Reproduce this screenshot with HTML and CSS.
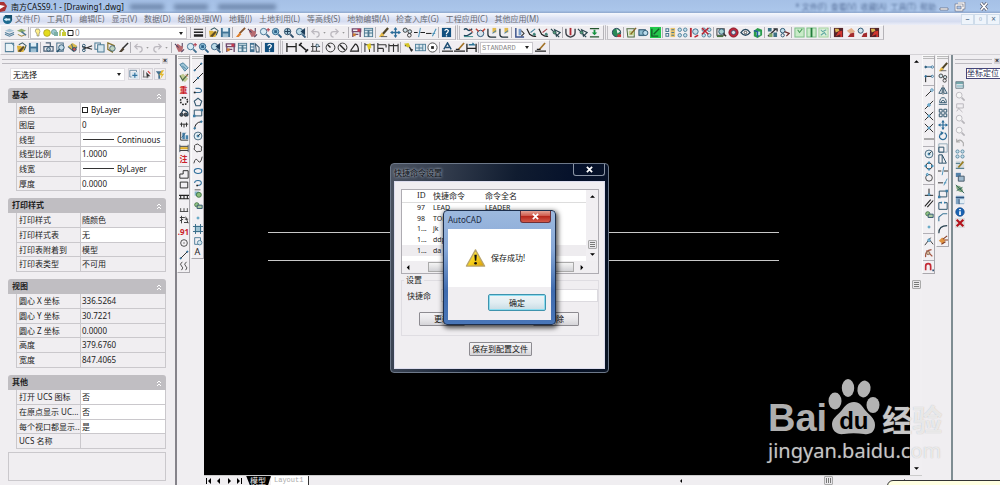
FILE: index.html
```html
<!DOCTYPE html>
<html lang="zh-CN">

<head>
    <meta charset="UTF-8">
    <meta name="viewport" content="width=device-width, initial-scale=1.0">
    <title>南方CASS9.1 - [Drawing1.dwg]</title>
    <link rel="stylesheet" href="styles.css">
</head>

<body>

    <!-- Title bar -->
    <header class="titlebar">
        <svg class="app-logo" viewBox="0 0 8 12"><path d="M0 1h4l3 4-2 5-5 1z" fill="#a33"/><path d="M0 4l5 1-5 3z" fill="#fff"/></svg>
        <span class="title-text">南方CASS9.1 - [Drawing1.dwg]</span>
        <span class="ghost"><i></i><i></i><i></i></span>
        <span class="ghost-menu">* 文件(F)&nbsp; 查看(V)&nbsp; 收藏(A)&nbsp; 工具(T)&nbsp; 帮助</span>
        <div class="window-buttons">
            <button aria-label="Minimize"><svg viewBox="0 0 12 10"><path d="M2 6h8v2H2z" fill="#fff" stroke="#556" stroke-width=".6"/></svg></button>
            <button aria-label="Restore"><svg viewBox="0 0 12 10"><path d="M4 1h6v5H8M2 3h6v5H2z" fill="none" stroke="#556" stroke-width="2.4"/><path d="M4 1h6v5H8M2 3h6v5H2z" fill="none" stroke="#fff" stroke-width="1.3"/></svg></button>
            <button class="wide" aria-label="Close"><svg viewBox="0 0 12 10"><path d="M3 1l6 7M9 1L3 8" stroke="#556" stroke-width="3"/><path d="M3 1l6 7M9 1L3 8" stroke="#fff" stroke-width="1.7"/></svg></button>
        </div>
    </header>

    <!-- Menu -->
    <nav class="menubar">
        <svg class="doc-logo" viewBox="0 0 12 12"><circle cx="6" cy="6" r="5" fill="#1d6a90"/><path d="M3 1h8v6H6z" fill="#15506f"/><path d="M2 6l3-2v1h4v2H5v1z" fill="#d9f1fa"/></svg>
        <a href="#">文件(F)</a>
        <a href="#">工具(T)</a>
        <a href="#">编辑(E)</a>
        <a href="#">显示(V)</a>
        <a href="#">数据(D)</a>
        <a href="#">绘图处理(W)</a>
        <a href="#">地籍(J)</a>
        <a href="#">土地利用(L)</a>
        <a href="#">等高线(S)</a>
        <a href="#">地物编辑(A)</a>
        <a href="#">检查入库(G)</a>
        <a href="#">工程应用(C)</a>
        <a href="#">其他应用(M)</a>
        <div class="mdi-buttons">
            <button aria-label="Minimize drawing">–</button>
            <button aria-label="Restore drawing">▫</button>
            <button aria-label="Close drawing">×</button>
        </div>
    </nav>

    <!-- Toolbars -->
    <div class="toolbar-area">
        <div class="toolbar-row">
            <div class="toolbar">
                <span data-icons="layers layerPrev |"></span>
                <div class="combo layer-combo">
                    <svg viewBox="0 0 40 10"><path d="M3 6Q0 3 2 1h3q2 2 0 5v2H3z" fill="#ffef8a" stroke="#776" stroke-width=".6"/><circle cx="13" cy="5" r="3.4" fill="#e4dc1c" stroke="#998c22" stroke-width=".6"/><circle cx="20" cy="4" r="2.6" fill="#9bc6cf" stroke="#587" stroke-width=".6"/><path d="M20 4h4v4h-4z" fill="#7cb0a6"/><path d="M26 8V3q2-3 4 0v1" fill="none" stroke="#9a2" stroke-width="1.2"/><path d="M28 4h4v4h-4z" fill="#cc3"/><path d="M34 2.5h5v5h-5z" fill="#fff" stroke="#222"/></svg>
                    <select aria-label="图层"><option>0</option></select>
                </div>
                <span data-icons="| lineweight | open save | brush pan zoom zoomWin zoomExt zoomPrev | undo caret redo caret | props table | eraser move copy trim extend | help"></span>
            </div>
            <div class="toolbar" data-icons="curveA curveB curveC curveC | align vee veeRed veeX | shield veeX levelDown"></div>
            <div class="toolbar" data-icons="globe | mapEdit camera greenEdit | nodesY nodes nodesRed nodesX | photo ring eye cube | puzzle nodesArrow | sheetA sheetB sheetC | star starLight starRing star"></div>
        </div>
        <div class="toolbar-row">
            <div class="toolbar" data-icons="newDoc open save | print preview publish | cut copyDoc paste match | undo caret redo caret | pan zoom zoomWin zoomPrev | props table design | help"></div>
            <div class="toolbar">
                <span data-icons="dimH dimAlign ordinate | radius diameter angle | qdim baseline dimCont | leader tolerance center | dimText dimEdit dimUpdate |"></span>
                <div class="combo style-combo">
                    <select aria-label="标注样式"><option>STANDARD</option></select>
                </div>
                <span data-icons="dimEdit"></span>
            </div>
        </div>
    </div>

    <div class="workspace">

        <!-- Properties palette -->
        <aside class="properties">
            <div class="palette-grip"><button aria-label="关闭">×</button></div>
            <div class="selection">
                <div class="combo"><select aria-label="选择"><option>无选择</option></select></div>
                <span class="selection-tools" data-icons="addSel pickSel quickSel"></span>
            </div>

            <section>
                <h2>基本 <button aria-label="折叠"><svg viewBox="0 0 6 8"><path d="M1 4l2-2 2 2M1 7l2-2 2 2" fill="none" stroke="#fff"/></svg></button></h2>
                <table>
                    <tr><th>颜色</th><td class="edit"><span class="swatch"></span>ByLayer</td></tr>
                    <tr><th>图层</th><td class="edit">0</td></tr>
                    <tr><th>线型</th><td class="edit"><span class="sample"></span>Continuous</td></tr>
                    <tr><th>线型比例</th><td class="edit">1.0000</td></tr>
                    <tr><th>线宽</th><td class="edit"><span class="sample"></span>ByLayer</td></tr>
                    <tr><th>厚度</th><td class="edit">0.0000</td></tr>
                </table>
            </section>

            <section>
                <h2>打印样式 <button aria-label="折叠"><svg viewBox="0 0 6 8"><path d="M1 4l2-2 2 2M1 7l2-2 2 2" fill="none" stroke="#fff"/></svg></button></h2>
                <table>
                    <tr><th>打印样式</th><td>随颜色</td></tr>
                    <tr><th>打印样式表</th><td class="edit">无</td></tr>
                    <tr><th>打印表附着到</th><td>模型</td></tr>
                    <tr><th>打印表类型</th><td>不可用</td></tr>
                </table>
            </section>

            <section>
                <h2>视图 <button aria-label="折叠"><svg viewBox="0 0 6 8"><path d="M1 4l2-2 2 2M1 7l2-2 2 2" fill="none" stroke="#fff"/></svg></button></h2>
                <table>
                    <tr><th>圆心 X 坐标</th><td>336.5264</td></tr>
                    <tr><th>圆心 Y 坐标</th><td>30.7221</td></tr>
                    <tr><th>圆心 Z 坐标</th><td>0.0000</td></tr>
                    <tr><th>高度</th><td>379.6760</td></tr>
                    <tr><th>宽度</th><td>847.4065</td></tr>
                </table>
            </section>

            <section>
                <h2>其他 <button aria-label="折叠"><svg viewBox="0 0 6 8"><path d="M1 4l2-2 2 2M1 7l2-2 2 2" fill="none" stroke="#fff"/></svg></button></h2>
                <table>
                    <tr><th>打开 UCS 图标</th><td class="edit">否</td></tr>
                    <tr><th>在原点显示 UC...</th><td class="edit">否</td></tr>
                    <tr><th>每个视口都显示...</th><td class="edit">是</td></tr>
                    <tr><th>UCS 名称</th><td></td></tr>
                </table>
            </section>
            <div class="hint-box"></div>
        </aside>

        <div class="side-tools">
            <div class="vtoolbar left-a" data-icons="tag tagEdit t:重 dots binoc ticks chart measure t:注 | notch box railing comb hash t:.91 sun line waves"></div>
            <div class="vtoolbar left-b" data-icons="line xline pline polygon rect arc circle cloud spline ellipse ellArc insert block point hatch region t:A"></div>
        </div>

        <!-- Drawing area -->
        <main class="drawing">
            <div class="canvas-row">
                <div class="canvas">
                    <svg class="lines"><path d="M64 177.5h511M64 205.5h511" stroke="#c8c8c8"/></svg>
                </div>
                <div class="vscroll">
                    <button aria-label="Scroll up"><svg viewBox="0 0 6 4"><path d="M0 4l3-3 3 3z"/></svg></button>
                    <span class="thumb"></span>
                    <button aria-label="Scroll down"><svg viewBox="0 0 6 4"><path d="M0 0l3 3 3-3z"/></svg></button>
                </div>
            </div>
            <div class="layout-tabs">
                <button aria-label="First"><svg viewBox="0 0 8 8"><path d="M1 1h1v6H1zM6 1v6L3 4z"/></svg></button>
                <button aria-label="Previous"><svg viewBox="0 0 8 8"><path d="M5 1v6L2 4z"/></svg></button>
                <button aria-label="Next"><svg viewBox="0 0 8 8"><path d="M3 1v6l3-3z"/></svg></button>
                <button aria-label="Last"><svg viewBox="0 0 8 8"><path d="M6 1h1v6H6zM2 1v6l3-3z"/></svg></button>
                <a class="tab active" href="#">模型</a>
                <a class="tab" href="#">Layout1</a>
                <div class="hscroll">
                    <button aria-label="Scroll left"><svg viewBox="0 0 8 8"><path d="M5 2v4L3 4z"/></svg></button>
                    <span class="thumb"></span>
                    <button aria-label="Scroll right"><svg viewBox="0 0 8 8"><path d="M3 2v4l2-2z"/></svg></button>
                </div>
            </div>
        </main>

        <div class="side-tools">
            <div class="vtoolbar right-a" data-icons="tempTrack from | endpoint midpoint cross cross dash | circle quadrant tangent | perp parallel block point | nearest none | magnet"></div>
            <div class="vtoolbar right-b" data-icons="eraser copy mirror offset array move rotate scale stretch trim extend rect breakRect chamfer fillet explode"></div>
        </div>

        <aside class="coord-panel">
            <div class="palette-grip"><button aria-label="关闭">×</button></div>
            <button class="coord-button">坐标定位</button>
            <div class="coord-tools" data-icons="stack zoomGrey pageGrey zoomGrey zoomGrey undoGrey nodes pencil windows leaf sheet info redX"></div>
        </aside>
    </div>

    <!-- Shortcut command dialog -->
    <div class="dialog settings" role="dialog" aria-label="快捷命令设置">
        <div class="dialog-title">快捷命令设置
            <button class="close" aria-label="关闭"><svg viewBox="0 0 8 8"><path d="M1 1l6 6M7 1L1 7" stroke="#fff" stroke-width="2"/></svg></button>
        </div>
        <div class="dialog-body">
            <div class="command-list">
                <div class="list-main">
                    <table>
                        <tr><th></th><th>ID</th><th>快捷命令</th><th>命令全名</th></tr>
                        <tr><td></td><td>97</td><td>LEAD</td><td>LEADER</td></tr>
                        <tr><td></td><td>98</td><td>TOL</td><td>TOLERANCE</td></tr>
                        <tr><td></td><td>1...</td><td>jk</td><td></td></tr>
                        <tr><td></td><td>1...</td><td>ddp</td><td></td></tr>
                        <tr class="selected"><td></td><td>1...</td><td>da</td><td></td></tr>
                    </table>
                    <div class="vscroll">
                        <button aria-label="Scroll up"><svg viewBox="0 0 6 4"><path d="M0 4l3-3 3 3z"/></svg></button>
                        <span class="thumb"></span>
                        <button aria-label="Scroll down"><svg viewBox="0 0 6 4"><path d="M0 0l3 3 3-3z"/></svg></button>
                    </div>
                </div>
                <div class="list-hscroll">
                    <button aria-label="Scroll left"><svg viewBox="0 0 8 8"><path d="M5 1v6L2 4z"/></svg></button>
                    <span class="bar"></span>
                    <button aria-label="Scroll right"><svg viewBox="0 0 8 8"><path d="M3 1v6l3-3z"/></svg></button>
                </div>
            </div>
            <fieldset>
                <legend>设置</legend>
                <div class="field">
                    <label for="alias">快捷命</label>
                    <input type="text" id="alias" value="da">
                </div>
                <div class="field-buttons">
                    <button class="btn">更新</button>
                    <button class="btn">删除</button>
                </div>
            </fieldset>
            <button class="btn save-config">保存到配置文件</button>
        </div>
    </div>

    <!-- Message box -->
    <div class="dialog message" role="alertdialog" aria-label="AutoCAD">
        <div class="dialog-title">AutoCAD
            <button class="close" aria-label="关闭"><svg viewBox="0 0 8 8"><path d="M1 1l6 6M7 1L1 7" stroke="#fff" stroke-width="2"/></svg></button>
        </div>
        <div class="message-body">
            <svg class="warning" viewBox="0 0 22 20"><defs><linearGradient id="warn" x2="1" y2="1"><stop offset="0" stop-color="#fff27a"/><stop offset=".5" stop-color="#f7d21c"/><stop offset="1" stop-color="#d79a08"/></linearGradient></defs><path d="M11 1.5L20.5 18.5h-19z" fill="url(#warn)" stroke="#b9a469" stroke-width="1.4" stroke-linejoin="round"/><path d="M9.8 6.5h2.6l-.6 6.5h-1.4z" fill="#111"/><circle cx="11.1" cy="15.5" r="1.4" fill="#111"/></svg>
            <span>保存成功!</span>
        </div>
        <div class="message-footer"><button class="ok">确定</button></div>
    </div>

    <!-- Watermark -->
    <div class="watermark">
        <div class="brand">
            <span class="bai">Bai</span>
            <span class="paw">
                <svg viewBox="0 0 52 56"><ellipse cx="7" cy="22" rx="6.5" ry="8.5"/><ellipse cx="20" cy="9" rx="6.2" ry="9"/><ellipse cx="36" cy="10" rx="6.5" ry="8.5" transform="rotate(12 36 10)"/><ellipse cx="45" cy="26" rx="6.5" ry="8"/><path d="M26 23c6 0 8 4 11 8 4 5 10 8 10 15 0 7-5 10-11 9-7-1-14-1-20 0-7 1-12-3-12-10 0-6 6-9 10-14 3-4 6-8 12-8z"/></svg>
                <b>du</b>
            </span>
            <span class="jy">经验</span>
        </div>
        <div class="url">jingyan.baidu.com</div>
    </div>

    <div class="balloon"></div>

    <script src="script.js"></script>
</body>

</html>
```

FILE: styles.css
```css
* {
    box-sizing: border-box;
}

body {
    margin: 0;
    height: 100vh;
    display: flex;
    flex-direction: column;
    overflow: hidden;
    position: relative;
    background: #f0eef1;
    color: #222;
    font-family: "Noto Sans", "Noto Sans CJK SC", sans-serif;
    font-size: 8px;
    line-height: 12px;
}

button {
    margin: 0;
    padding: 0;
    border: none;
    background: none;
    font: inherit;
    color: inherit;
    display: inline-flex;
    align-items: center;
    justify-content: center;
}

svg {
    display: block;
}

a {
    color: inherit;
    text-decoration: none;
}

/* Title bar */
.titlebar {
    flex: none;
    height: 13px;
    display: flex;
    align-items: center;
    background: linear-gradient(#a5c0e6, #abc6ea 80%, #8fa8cd);
    overflow: hidden;
}

.app-logo {
    width: 8px;
    height: 12px;
    margin-right: 3px;
}

.title-text {
    color: #111;
}

.ghost {
    display: flex;
    gap: 10px;
    margin-left: 6px;
    filter: blur(2px);
    opacity: 0.5;
}

.ghost i {
    width: 34px;
    height: 6px;
    background: #3c5378;
}

.ghost i:last-child {
    width: 58px;
}

.ghost-menu {
    margin-left: auto;
    filter: blur(1px);
    color: #56709a;
}

.window-buttons {
    display: flex;
    margin-right: 0;
}

.window-buttons button {
    width: 16px;
    height: 12px;
}

.window-buttons .wide {
    width: 32px;
}

.window-buttons svg {
    width: 12px;
    height: 10px;
}

/* Menu */
.menubar {
    flex: none;
    height: 12px;
    display: flex;
    align-items: center;
    gap: 8px;
    background: linear-gradient(#f6f8fd, #dfe4f4 40%, #d5dcf0 70%, #eceef8);
    color: #686b74;
}

.menubar > a + a {
    margin-left: -1px;
}

.doc-logo {
    width: 11px;
    height: 11px;
    margin: 0 -6px 0 2px;
}

.mdi-buttons {
    margin-left: auto;
    display: flex;
}

.mdi-buttons button {
    width: 13px;
    height: 11px;
    border: 1px solid #cfdcea;
    background: #eef4fb;
    color: #4b6a88;
}

/* Toolbars */
.toolbar-area {
    flex: none;
    height: 30px;
    border-bottom: 1px solid #d4d2d6;
}

.toolbar-row {
    display: flex;
    height: 15px;
}

.toolbar,
.toolbar > span {
    display: flex;
    align-items: center;
}

.toolbar {
    border: 1px solid #fafafa;
    border-right-color: #b5b3b8;
    border-bottom-color: #c5c3c8;
    padding: 0 3px 0 2px;
}

.toolbar + .toolbar {
    margin-left: 1px;
    border-left: 3px double #c0bec3;
}

.tool {
    flex: none;
    width: 12px;
    height: 12px;
}

.tool svg {
    width: 11px;
    height: 11px;
}

.tool.caret {
    width: 7px;
}

.tool.text {
    color: #222;
    font-size: 9px;
}

.tool.red {
    color: #cb1f2b;
    font-size: 8px;
    font-weight: bold;
}

.sep {
    flex: none;
    width: 1px;
    height: 11px;
    margin: 0 1px;
    background: #b2b0b6;
}

.combo {
    position: relative;
}

.combo::after {
    content: "";
    position: absolute;
    right: 4px;
    top: 5px;
    border: 2px solid transparent;
    border-top: 3px solid #222;
    pointer-events: none;
}

.combo select {
    appearance: none;
    width: 100%;
    height: 12px;
    border: 1px solid #c9c7cc;
    border-radius: 0;
    background: #fff;
    padding: 0 2px;
    font: inherit;
    font-size: 8px;
    line-height: 10px;
    color: #333;
}

.layer-combo {
    width: 157px;
    margin-right: 2px;
}

.layer-combo svg {
    position: absolute;
    left: 4px;
    top: 1px;
    width: 40px;
    height: 10px;
}

.layer-combo select {
    padding-left: 44px;
    color: #888;
}

.style-combo {
    width: 53px;
    margin-right: 1px;
}

.style-combo select {
    padding: 0 0 0 1px;
    font-family: "Liberation Mono", monospace;
    font-size: 7px;
    color: #888;
}

/* Workspace */
.workspace {
    flex: 1;
    min-height: 0;
    display: flex;
}

.properties {
    width: 177px;
    padding: 0 9px 0 8px;
    border-right: 2px solid #85838a;
}

.palette-grip {
    height: 12px;
    display: flex;
    align-items: center;
    gap: 2px;
}

.palette-grip::before {
    content: "";
    flex: 1;
    height: 3px;
    border: 1px solid #bcbac0;
    border-width: 1px 0;
    margin-left: -6px;
}

.palette-grip button {
    width: 6px;
    height: 6px;
    margin-right: -2px;
    font-size: 7px;
    font-weight: bold;
    background: #d5d3d8;
}

.selection {
    display: flex;
    gap: 3px;
    margin: 1px 0 7px 2px;
}

.selection .combo {
    flex: 1;
}

.selection .combo select {
    height: 13px;
    border-color: #e1dfe4;
    color: #111;
}

.selection-tools {
    display: flex;
    gap: 1px;
}

.selection-tools .tool {
    border: 1px solid #d5d3d9;
}

.properties section {
    margin-bottom: 7px;
}

.properties section:last-of-type {
    margin-bottom: 3px;
}

.properties h2 {
    display: flex;
    justify-content: space-between;
    margin: 0;
    height: 15px;
    padding: 0 4px;
    border-radius: 3px 3px 0 0;
    background: #c0bec2;
    font-size: 8px;
    line-height: 14px;
}

.properties h2 svg {
    width: 6px;
    height: 8px;
}

.properties table {
    width: calc(100% - 8px);
    margin-left: 8px;
    border-spacing: 0;
    border-left: 1px solid #cac8cc;
    table-layout: fixed;
}

.properties tr {
    height: 15px;
}

.properties tr:nth-child(3n) {
    height: 14px;
}

.properties th,
.properties td {
    padding: 0 1px;
    border: 1px solid #cac8cc;
    border-width: 0 1px 1px 0;
    font-weight: normal;
    text-align: left;
    white-space: nowrap;
    overflow: hidden;
}

.properties th {
    width: 64px;
    padding: 0 0 1px 2px;
    line-height: 11px;
}

.properties .edit {
    background: #fff;
}

.swatch {
    display: inline-block;
    width: 6px;
    height: 6px;
    margin-right: 3px;
    border: 1px solid #222;
}

.sample {
    display: inline-block;
    width: 31px;
    height: 1px;
    margin: 0 3px 3px 1px;
    background: #333;
}

.hint-box {
    height: 29px;
    border: 1px solid #cac8cc;
}

.side-tools {
    flex: none;
    display: flex;
    align-items: flex-start;
    gap: 1px;
    width: 27px;
}

.vtoolbar {
    width: 13px;
    display: flex;
    flex-direction: column;
    align-items: center;
    padding-top: 5px;
    border: 1px solid #fafafa;
    border-right-color: #aaa8ad;
    border-bottom-color: #aaa8ad;
    background: linear-gradient(#bbb 1px, transparent 1px, transparent 2px, #bbb 2px, #bbb 3px, transparent 3px) no-repeat #f2f0f3;
}

.vtoolbar .tool {
    flex: 1;
    height: auto;
    min-height: 0;
}

.vtoolbar .tool svg {
    width: 10px;
    height: 10px;
}

.vtoolbar .sep {
    width: 11px;
    height: 1px;
    margin: 1px 0;
}

.left-a {
    height: 218px;
}

.left-b {
    height: 204px;
}

.right-a {
    height: 219px;
}

.right-b {
    height: 192px;
}

/* Drawing area */
.drawing {
    flex: 1;
    min-width: 0;
    display: flex;
    flex-direction: column;
}

.canvas-row {
    flex: 1;
    min-height: 0;
    display: flex;
}

.canvas {
    flex: 1;
    background: #000;
}

.lines {
    width: 100%;
    height: 100%;
}

.vscroll {
    width: 12px;
    display: flex;
    flex-direction: column;
    align-items: center;
    justify-content: space-between;
    padding: 4px 0;
    background: #f1eff2;
}

.vscroll svg {
    width: 5px;
    height: 4px;
}

.thumb {
    width: 9px;
    height: 9px;
    border: 1px solid #aaa;
    border-radius: 1px;
    background: repeating-linear-gradient(#777 0 1px, #eee 1px 2px) center / 5px 5px no-repeat #e7e5e9;
}

.canvas-row .vscroll .thumb {
    margin-top: 39px;
}

.layout-tabs {
    flex: none;
    height: 10px;
    display: flex;
    align-items: center;
    border-top: 1px solid #ccc;
}

.layout-tabs button {
    width: 10px;
    height: 9px;
}

.layout-tabs svg {
    width: 8px;
    height: 8px;
}

.tab {
    height: 10px;
    padding: 0 5px 0 3px;
    line-height: 9px;
    color: #aaa;
    font-family: "Liberation Mono", monospace;
    font-size: 7px;
    background: #fff;
    border-right: 1px solid #333;
}

.tab.active {
    margin-left: 2px;
    padding: 0 4px;
    background: #000;
    color: #eee;
    font-family: "Noto Sans CJK SC", sans-serif;
    font-size: 8px;
    clip-path: polygon(0 0, 100% 0, 88% 100%, 16% 100%);
}

.hscroll {
    flex: 1;
    max-width: 246px;
    margin-left: auto;
    display: flex;
    align-items: center;
    justify-content: space-between;
    padding-right: 12px;
}

.hscroll .thumb {
    margin-left: 70px;
    background: repeating-linear-gradient(90deg, #777 0 1px, #eee 1px 2px) center / 5px 5px no-repeat #e7e5e9;
}

/* Coordinate panel */
.coord-panel {
    flex: none;
    width: 49px;
    margin-left: 2px;
    border-left: 2px solid #7e8c92;
    overflow: hidden;
}

.coord-panel .palette-grip::before {
    margin-left: 2px;
}

.coord-panel .palette-grip button {
    margin-right: 0;
}

.coord-button {
    width: 40px;
    height: 11px;
    margin-left: 13px;
    justify-content: flex-start;
    border: 1px solid #454578;
    background: #fff;
    color: #2c2c55;
}

.coord-tools {
    width: 12px;
    height: 150px;
    display: flex;
    flex-direction: column;
    margin-left: 1px;
}

.coord-tools .tool {
    flex: 1;
    height: auto;
    min-height: 0;
}

.coord-tools .tool svg {
    width: 10px;
    height: 10px;
}

/* Dialogs */
.dialog {
    position: absolute;
    border-radius: 4px;
}

.dialog-title {
    display: flex;
    justify-content: space-between;
}

.close svg {
    width: 7px;
    height: 7px;
}

.settings {
    left: 390px;
    top: 163px;
    width: 219px;
    padding: 0 3px 3px;
    border: 1px solid #6d7889;
    background: linear-gradient(100deg, #4c5462, #101c30 50%, #04102a 75%, #0a1424);
}

.settings .dialog-title {
    height: 17px;
    line-height: 17px;
    color: #0b0d10;
    text-shadow: 0 0 3px #aeb8c6, 0 0 3px #8f99a8;
}

.settings .close {
    width: 32px;
    height: 12px;
    border: 1px solid #8b95a5;
    border-top: 0;
    border-radius: 0 0 3px 3px;
}

.dialog-body {
    display: flex;
    flex-direction: column;
    padding: 7px 5px 12px 6px;
    background: #f0eef1;
    border: 1px solid #dde;
}

.command-list {
    height: 85px;
    display: flex;
    flex-direction: column;
    border: 1px solid #aeacb2;
}

.list-main {
    flex: 1;
    min-height: 0;
    display: flex;
    background: #fff;
}

.command-list table {
    flex: 1;
    height: 66px;
    border-spacing: 0;
    table-layout: fixed;
    line-height: 10px;
}

.command-list th,
.command-list td {
    padding: 0 0 0 2px;
    font-size: 7px;
    font-weight: normal;
    text-align: left;
    white-space: nowrap;
}

.command-list th {
    height: 13px;
    font-size: 8px;
    border-bottom: 1px solid #ddd;
}

.command-list th:nth-child(1) {
    width: 13px;
}

.command-list th:nth-child(2) {
    width: 16px;
    font-family: "Liberation Serif", serif;
}

.command-list th:nth-child(3) {
    width: 52px;
}

.selected {
    background: #eeecef;
}

.command-list .vscroll {
    width: 12px;
}

.command-list .vscroll .thumb {
    margin-top: 37px;
}

.list-hscroll {
    height: 12px;
    display: flex;
    align-items: center;
    padding-right: 11px;
}

.list-hscroll button {
    width: 12px;
}

.list-hscroll svg {
    width: 7px;
    height: 7px;
}

.list-hscroll .bar {
    flex: 1;
    height: 10px;
    margin: 0 1px 0 14px;
    border: 1px solid #aaa;
    background: linear-gradient(#f4f4f4, #d2d2d6);
}

fieldset {
    margin: 0;
    padding: 0;
    min-width: 0;
    border: 1px solid #dfdde2;
    height: 62px;
}

legend {
    margin-left: 2px;
    padding: 0 2px;
}

.field {
    display: flex;
    align-items: center;
    gap: 10px;
    padding: 3px 0 0 5px;
}

.field input {
    flex: 1;
    min-width: 0;
    height: 13px;
    padding: 0 3px;
    border: 1px solid #dcdadf;
    font: inherit;
    background: #fff;
}

.field-buttons {
    display: flex;
    justify-content: space-between;
    padding: 10px 19px 0 17px;
}

.btn {
    width: 46px;
    height: 14px;
    border: 1px solid #8d8b91;
    border-radius: 1px;
    background: linear-gradient(#f4f3f5, #e9e8eb 50%, #d5d4d8);
    color: #111;
}

.save-config {
    align-self: center;
    width: 63px;
    margin-top: 6px;
}

.message {
    left: 443px;
    top: 210px;
    width: 113px;
    padding: 0 4px 4px;
    border: 1px solid #1d2f4d;
    background: linear-gradient(#9db9de, #88a9d8 38px, #3f6bae 80px, #4976b8);
    box-shadow: 1px 2px 5px 1px rgba(0, 0, 0, 0.7);
}

.message .dialog-title {
    height: 18px;
    line-height: 18px;
    color: #1a2740;
}

.message .close {
    width: 31px;
    height: 12px;
    border: 1px solid #6e2f37;
    border-top: 0;
    border-radius: 0 0 3px 3px;
    background: linear-gradient(#e4a295, #d0584a 45%, #b8281d 50%, #d3594a);
}

.message-body {
    height: 58px;
    display: flex;
    align-items: center;
    gap: 5px;
    padding-left: 17px;
    background: #fff;
    color: #111;
}

.warning {
    width: 21px;
    height: 20px;
}

.message-footer {
    height: 33px;
    display: flex;
    justify-content: flex-end;
    align-items: flex-start;
    padding: 7px 5px;
    background: #f0eef1;
}

.ok {
    width: 58px;
    height: 17px;
    border: 1px solid #3f93ad;
    border-radius: 2px;
    box-shadow: inset 0 0 0 1px #8adcf0;
    background: linear-gradient(#eff4f6, #e1edf2 50%, #c8dce4);
    color: #111;
}

/* Watermark */
.watermark {
    position: absolute;
    left: 768px;
    top: 379px;
    color: rgba(255, 255, 255, 0.7);
    white-space: nowrap;
    pointer-events: none;
}

.brand {
    display: flex;
    align-items: flex-end;
    height: 58px;
}

.bai {
    font: bold 38px/38px "Liberation Sans", sans-serif;
}

.paw {
    position: relative;
    width: 52px;
    height: 56px;
    margin: 0 2px 2px 1px;
}

.paw svg {
    width: 52px;
    height: 56px;
    fill: #b3b3b3;
}

.paw b {
    position: absolute;
    left: 11px;
    bottom: 2px;
    font: bold 24px/24px "Liberation Sans", sans-serif;
    color: #000;
}

.jy {
    font: bold 30px/38px "Noto Sans CJK SC", sans-serif;
    text-shadow: 0 0 1px rgba(140, 140, 140, 0.6);
}

.url {
    font-size: 20px;
    line-height: 28px;
    text-shadow: 0 0 1px rgba(140, 140, 140, 0.6);
}

.balloon {
    position: absolute;
    left: 887px;
    right: -6px;
    bottom: -10px;
    height: 15px;
    border: 1px solid #333;
    border-radius: 6px;
    background: #ffffe1;
}
```

FILE: script.js
```javascript
// Icon markup, all on a 12x12 grid
const N = '#24506b';
const s = (d, c = N, w = 1.1) => `<path d="${d}" fill="none" stroke="${c}" stroke-width="${w}"/>`;
const f = (d, c = N) => `<path d="${d}" fill="${c}"/>`;
const c = (x, y, r, fill = 'none', stroke = N) => `<circle cx="${x}" cy="${y}" r="${r}" fill="${fill}" stroke="${stroke}"/>`;
const lens = (col, fill) => c(5, 5, 3.5, fill, col) + s('M8 8l3.5 3.5', col, 2);
const grid = (fill, col) => [3, 9].map(x => [3, 9].map(y => c(x, y, 1.9, fill, col)).join('')).join('');

const icons = {
    layers: f('M1 4l5-2 5 2-5 2z', '#a8c3d4') + s('M1 6l5 2 5-2M1 8l5 2 5-2', '#55809c'),
    layerPrev: f('M1 4l5-2 5 2-5 2z', '#8da867') + s('M2 8l4 2 5-2', '#a58e45') + s('M6 5l5 4', '#4a7693', 1.6),
    lineweight: f('M1 2h10v1H1zM1 5h10v1.5H1zM1 8h10v2.5H1z', '#222'),
    open: f('M1 4h4l1 1h5l-3 6H2z', '#dcb33c') + s('M3 3l4-2 4 3-2 5', '#3a5d66') + f('M2 10l6-6 1 2-4 5z', '#5c4b28'),
    save: f('M1 1h10v10H1z', '#3f7395') + f('M3 1h6v4H3z', '#dfeef6') + f('M3 7h6v4H3z', '#9dbfd2'),
    brush: s('M11 1L5 7', '#86552d', 2) + f('M5 6l2 2-3 3-3 0z', '#e0802c'),
    pan: f('M2 5l2-3 3 2 3 1-1 5-4 1z', '#b86b70') + s('M1 2l4 4M9 1v4M8 11l3-3', '#4c3b59'),
    zoom: lens('#3f6f8f', '#d9ecf5') + s('M8 3h4M10 1v4', '#b03a4a'),
    zoomWin: lens('#2a5f86', '#8fc0d8') + f('M3.5 3.5h3v3h-3z', '#2a5f86'),
    zoomExt: lens('#2b4b66', '#a9cbdb') + s('M2 5h6M5 2v6', '#23405a'),
    zoomPrev: lens('#355f80', '#bcdbe8') + f('M6 5l5-4v8z', '#1d3e5b'),
    undo: s('M2 5h5q3 0 3 3t-3 3M5 2L2 5l3 3', '#bcb9bf', 1.4),
    redo: s('M10 5H5Q2 5 2 8t3 3M7 2l3 3-3 3', '#bcb9bf', 1.4),
    caret: f('M4 5h4L6 8z', '#999'),
    props: s('M1.5 2h9v3h-9zM2 5v6M10 5v6M4 8h4', '#704a6d', 1.5) + f('M2 7h3v3H2z', '#cc7b30') + f('M7 2h3v3H7z', '#c43b50'),
    table: f('M1 1h10v10H1z', '#4d7890') + f('M2 4h3v2H2zM7 4h3v2H7zM2 7h3v3H2zM7 7h3v3H7zM2 2h8v1H2z', '#dce9ef'),
    design: f('M1 1h5v10H1z', '#427292') + f('M2 3h3v2H2zM2 6h3v2H2z', '#e6eef4') + s('M7 2l4 4v5H8z', '#39586f'),
    eraser: s('M11 1L5 8', '#4f4428', 2.4) + f('M4 6l3 3-3 2H1z', '#e6ba49') + f('M3 10h7v1H3z', '#555'),
    move: s('M6 1v10M1 6h10', '#2b6c99', 1.4) + f('M6 0l2 3H4zM6 12l2-3H4zM0 6l3-2v4zM12 6L9 4v4z', '#2b6c99'),
    copy: c(3.5, 3.5, 2.3, '#cfe2ea', '#333') + c(8.5, 5, 2, '#cfe2ea', '#333') + c(8, 9, 2, 'none', '#333'),
    trim: s('M0 6h4M7 6h5', '#222') + s('M7 1L5 11', '#4691b8'),
    extend: s('M0 7h6', '#222') + s('M11 2L7 10', '#4691b8') + s('M7 7h3', '#4691b8'),
    help: f('M1 1h10v10H1z', '#12507f') + s('M4 4q2-3 4 0 0 1-2 3v1', '#fff', 1.4) + f('M5.3 9h1.4v1.4H5.3z', '#fff'),
    curveA: s('M1 3q2-2 4 0t5-1M1 9q3 2 9-3', '#21465d', 1.5) + s('M7 2l4 4', '#b8473a') + f('M1 10h10v1H1z', '#388'),
    curveB: c(6, 7, 3.5, '#d9e6ee', '#234e72') + s('M1 2l3 3M11 2L8 5', '#c04438', 1.6),
    curveC: s('M1 2v6q0 3 3 3h6', '#25343c', 1.4) + f('M6 1h4v5H6z', '#e1ba4b') + s('M6 7l4-3', '#4e7f9d'),
    align: s('M2 1v10h9', '#3c538d', 1.6) + f('M5 2h3v7H5z', '#789cc9') + s('M8 4l3 3-3 3', '#333'),
    vee: s('M1 2l3 6q4 3 7 2', '#222', 1.3) + s('M5 6l5-4', '#43829b') + c(9, 8, 1.2, '#3d8667', '#377'),
    veeRed: s('M1 2l3 6q4 3 7 2', '#222', 1.3) + s('M5 6l5-4', '#a4444a') + c(9, 8, 1.2, '#5f8a67', '#377'),
    veeX: s('M1 2l9 9M5 3l6 3-4 4z', '#2b4750', 1.3) + c(5, 6, 1.6, '#52a179', '#355'),
    shield: s('M1 2v4q0 4 5 5 5-1 5-5V2', '#3b4047', 1.5) + s('M6 1v8', '#b02c35', 2),
    levelDown: f('M1 1h10v1.5H1zM1 10h10v1.5H1z', '#23552e') + f('M5 3h2v3h2L6 9 3 6h2z', '#15933f'),
    globe: c(6, 6, 4.5, '#2a8c56', '#24435a') + f('M6 2l4 3-3 2z', '#eee') + f('M7 8h4v3H7z', '#c73939'),
    mapEdit: s('M1 2h8v9H2z', '#4b6b3d') + f('M3 4h6v5H3z', '#bfd38b') + s('M11 1L5 8', '#856126', 1.5),
    camera: f('M1 3h6v7H1z', '#90bdd1') + s('M1 3h7v6H1z') + c(8, 6.5, 2.8, '#bcdced'),
    greenEdit: f('M0 0h12v12H0z', '#23c84c') + s('M2 2v8h7M10 2L4 8', '#145d29', 1.5),
    nodesY: f('M6 1h5v10H6z', '#e9c46c') + s('M1 2h3v3H1zM1 7h3v3H1zM7 3h3M7 6h3M7 9h3', '#49778f'),
    nodes: grid('#c3dfec', '#4f8099'),
    nodesRed: s('M2 1v10', '#b92431', 2) + c(7, 5, 3, '#cbdde8', '#356a8c') + s('M6 11l4-2', '#b92431', 1.6),
    nodesX: grid('#c3dfec', '#4f8099') + s('M1 1l7 7M8 1L1 8', '#b92431', 1.6),
    nodesArrow: c(4, 4, 2.5, '#c3dfec') + c(4, 9, 1.8) + s('M6 5l5 2-3 3', '#6c3030', 1.4),
    photo: s('M1 2h8v7H1z', '#3e4043') + c(6, 5, 3, '#a5cfd0') + s('M8 7l3 3', '#333', 1.6) + f('M1 9h7v2H1z', '#4a6f43'),
    ring: c(6, 6, 5, '#b9263a', '#812') + c(6, 6, 2.3, '#d9e4ea', '#457'),
    eye: s('M1 6q5-7 10 0-5 6-10 0z', '#27475d', 1.4) + c(6, 6, 1.4, '#fff', '#444'),
    cube: f('M2 4l4-3 5 2v6l-5 3-4-2z', '#2a9c4b') + f('M5 5h4v4H5z', '#bfe1ee') + s('M2 4l4 1v6', '#2359a0', 1.4),
    puzzle: f('M1 1h4v4H1zM7 6h4v5H7z', '#3e7184') + s('M1 10l9-8M7 2h4v3', '#2b2f33', 1.5) + f('M2 7h4v4H2z', '#82a868'),
    sheetA: f('M1 1h10v10H1z', '#c9ebc8') + s('M1 1h10v10H1z', '#7fc089') + s('M4 3l2 3 3-4', '#469b58'),
    sheetB: f('M1 1h10v10H1z', '#c9ebc8') + s('M1 1h10v10H1z', '#7fc089') + f('M5 1h2v10H5z', '#217d3a'),
    sheetC: f('M1 1h10v10H1z', '#d9efd6') + s('M1 1h10v10H1z', '#a5d3a2') + s('M3 3l2 2 4-2M3 9l4-3 2 3', '#5ea8a2'),
    star: f('M1 1h10v10H1z', '#54242a') + f('M3 10l3-5 4-1v7H8V8z', '#d2362f') + f('M2 2l4 0 1 2-4 2z', '#d9b34f'),
    starLight: f('M2 4l5-3 4 4-5 3z', '#e3b08a') + f('M3 11l3-4 4-1v5z', '#a32a2e'),
    starRing: c(4, 4, 2.8, '#d2e4ee') + f('M5 11l2-4 4-1v5z', '#a32a2e'),
    newDoc: s('M1.5 1.5h9v9h-9z', '#558199') + f('M2 2h8v7H2z', '#e8f3f7') + s('M8 1l3 3', '#558199'),
    print: s('M3 1h5v4M1 5h10v5H1z', '#4a6076', 1.3) + c(6, 8, 2, '#b9cbd6'),
    preview: s('M2 1h7v9H2z', '#4a708a') + c(7, 6, 3, '#c5dbe8') + s('M5 8l-3 3', N, 1.6),
    publish: f('M1 5l5-4 5 3-4 6z', '#d8b84c') + s('M1 5l6 5 4-5M5 2l2 7', '#4d6a71') + c(8, 8, 2, '#c55'),
    cut: s('M0 5l11 3M1 8l10-4', '#333', 1.2) + c(2, 4, 1.5) + c(2, 9, 1.5),
    copyDoc: s('M1 1h6v7H1z', '#4d7c96') + f('M4 3h7v8H4z', '#d6e6ee') + s('M4 3h7v8H4z', '#4d7c96'),
    paste: s('M2 1l7 3-2 7-5-3z', '#867129', 1.3) + c(7, 7, 3, '#bfd4c0', '#467'),
    match: s('M11 1L5 7', '#333', 1.6) + f('M5 6l2 2-3 3H1z', '#4d4030'),
    dimH: s('M1 1v10M11 1v10M1 5h10', '#222', 1.4),
    dimAlign: s('M2 3l8 7M4 1L1 4M11 8l-3 3', '#222', 1.7),
    ordinate: s('M1 10h10M3 1v9M7 2v8M1 5h10', '#444') + c(8, 4, 1.5, '#cde', '#467'),
    radius: c(6, 6, 4.8, 'none', '#222') + s('M6 6L3 3', '#222', 1.6),
    diameter: c(6, 6, 4.8, 'none', '#222') + s('M3 3l6 6', '#222', 1.6),
    angle: s('M1 10h10M2 9l5-7M7 2q4 3 3 8', '#222', 1.3),
    qdim: s('M1 1v10M6 3v8M11 2v9M1 3h10', '#333') + f('M3 3l4-2 1 5-3 3z', '#e0cb25'),
    baseline: s('M2 1v10M2 3h9M2 7h6M8 7v4M11 3v3', '#333', 1.2),
    dimCont: s('M1 2v9M6 2v9M11 2v9M1 4h10', '#333', 1.2),
    leader: s('M2 4h4l4 6', '#333', 1.5) + f('M1 2l5-1 2 4-3 1z', '#d5c426') + f('M7 7l4 1-2 3z', '#333'),
    tolerance: f('M0 2h12v8H0z', '#51809a') + f('M1 3h3v3H1zM5 3h3v3H5zM1 7h3v2H1zM5 7h3v2H5zM9 3h2v6H9z', '#d7e5ed'),
    center: c(6, 6, 5, '#fff', '#444') + f('M4.5 4.5h3v3h-3z', '#222'),
    dimText: s('M2 8l4-7 4 7M4 6h4', '#1e4f74', 1.6) + s('M0 10h12', '#222', 1.3),
    dimEdit: s('M11 1L5 8', '#a27327', 1.8) + s('M0 10h12M2 8h4', '#222', 1.5),
    dimUpdate: s('M1 2v9M11 2v9M1 7h10', '#222', 1.4) + s('M3 3h6l-2-2', '#2d7597', 1.4),
    addSel: s('M1 1h8v8H1z', '#6789a0') + f('M3 3h8v8H3z', '#d5e5ef') + s('M7 4v6M4 7h6', '#2f719f', 1.4),
    pickSel: s('M2 1v8M1 9h7', '#666') + f('M5 3l5 5H7l-1 3z', '#333') + s('M7 2l3 3', '#c33', 1.4),
    quickSel: f('M1 2h8L6 6v5H4V6z', '#45718f') + f('M8 1L5 7h3l-2 5 5-7H8l3-4z', '#e3b92e'),
    tag: f('M1 3l4-2 6 6-4 4z', '#9dc4d6') + s('M1 3l4-2 6 6-4 4zM4 5l4 3', '#477e9c'),
    tagEdit: f('M1 3l4-2 6 6-4 4z', '#c0c992') + s('M11 1L4 9M1 3l4 7', '#4b6a42', 1.4) + s('M8 2l3 2', '#c64'),
    dots: `<circle cx="6" cy="6" r="4.2" fill="none" stroke="#222" stroke-width="1.8" stroke-dasharray="2 1.3"/>`,
    binoc: c(3, 8, 2, '#456', '#222') + c(8, 8, 2, '#456', '#222') + s('M3 6l2-4 4 2q3 2 1 6', '#234158', 1.5),
    ticks: s('M1 5h10M3 3v5M6 5v4M9 3v5', '#333', 1.2),
    chart: s('M2 1v10h9', '#333') + f('M4 2h3v8H4zM8 5h3v5H8z', '#4682ab') + s('M3 8l5-6', '#36658a'),
    measure: f('M1 5h10v2.5H1z', '#e2ae28') + s('M1 4h10M1 9h10', '#333') + s('M1 2v9M11 2v9', '#456'),
    notch: s('M1 11V6h4V2h6v9z', '#222'),
    box: s('M1.5 2.5h9v7h-9z', '#222'),
    railing: s('M0 4h12M0 8h12M2 4v4M6 4v4M10 4v4', '#222', 1.3),
    comb: s('M1 9h10M2 5v4M6 5v4M10 5v4', '#444', 1.1),
    hash: s('M1 3h6M3 1v9M7 5h4M6 9h5M8 2l3 8M1 7l4-2', '#333'),
    sun: c(6, 6, 4, 'none', '#333') + f('M5.3 5.3h1.4v1.4H5.3z', '#333'),
    waves: s('M4 1Q0 4 3 6t0 5M9 1Q5 4 8 6t0 5', '#333', 1),
    line: s('M2 10l8-8', '#222') + c(2, 10, .8, '#2b6c99', '#2b6c99') + c(10, 2, .8, '#2b6c99', '#2b6c99'),
    xline: s('M0 12L12 0', '#222', 1.2) + c(6, 6, 1, '#2b6c99', '#2b6c99'),
    pline: s('M1 9h7q3-1 2-3T7 4H3', '#3a6e91', 1.3) + f('M1 8h2v2H1z', '#222'),
    polygon: s('M6 1.5l4.5 3.5-2 5.5h-5l-2-5.5z', '#31566d', 1.3),
    rect: s('M1.5 2.5h9v7h-9z', '#31566d', 1.2) + f('M9 1h3v3H9zM0 8h3v3H0z', '#3c7da5'),
    arc: s('M2 11Q2 3 10 2', '#222', 1.2) + c(2, 10, 1, '#3c7da5', '#3c7da5') + c(10, 2, 1, '#3c7da5', '#3c7da5'),
    circle: c(6, 6, 4.7, '#e4f0f5', '#31566d') + c(6, 6, 1.3, '#3c7da5', '#3c7da5') + s('M6 6l3-3', '#333'),
    cloud: s('M3 2q3-2 5 1 4 1 2 4 1 4-3 3-3 2-4-1-3-1-1-4-1-2 1-3z', '#333'),
    spline: s('M1 10q2-8 5-3t5-5', '#333'),
    ellipse: `<ellipse cx="6" cy="6" rx="4.5" ry="3" fill="none" stroke="#2b6c99" stroke-width="1.3"/>`,
    ellArc: s('M2 6q0-3 4-3t4 3-5 3', '#2b6c99', 1.3) + f('M4 8h2v2H4z', '#222'),
    insert: f('M2 3h5v5H2z', '#83b3c7') + c(7, 7, 3, '#8abd7a', '#366b3e') + s('M2 1h7', '#555'),
    block: c(4.5, 4.5, 2.5, '#96c788', '#3c6f41') + f('M5 5h6v4H5z', '#aac9a1') + s('M5 5h6v4H5z', '#31566d'),
    point: c(6, 6, 1.2, '#bce2ef', '#3c8fb5'),
    hatch: f('M2 2h8v8H2z', '#9fc3d3') + s('M3 0v12M9 0v12M0 3h12M0 9h12', '#356985'),
    region: s('M2 2h7v8H2z', '#4b7b97') + c(8, 8, 2.7, '#cfe3ec', '#4b7b97'),
    tempTrack: s('M1 6h9', '#2b6c99', 1.2) + c(2, 6, 1, '#2b6c99') + c(10, 6, 1.4, '#fff', '#2b6c99'),
    from: s('M2 11V4h8', '#222', 1.2) + c(2, 4, 1, '#2b6c99', '#2b6c99') + c(10, 4, 1.3, '#fff', '#2b6c99'),
    endpoint: s('M2 10l8-8', '#222') + c(9.5, 2.5, 1.5, '#fff', '#2b7fae'),
    midpoint: s('M1 11L11 1', '#222') + c(6, 6, 1.5, '#bde', '#2b7fae'),
    cross: s('M1 1l10 10M11 1L1 11', '#222') + c(6, 6, 1.3, '#bde', '#2b7fae'),
    dash: s('M0 6h12', '#555'),
    quadrant: c(6, 6, 3.6, 'none', '#333') + [[6, 2], [6, 10], [2, 6], [10, 6]].map(p => c(p[0], p[1], 1.1, '#6fb3d2', '#2b7fae')).join(''),
    tangent: c(6, 7, 4, 'none', '#333') + c(4, 3, 1.2, '#bde', '#2b7fae'),
    perp: s('M1 10h10M6 2v8', '#222', 1.2) + c(6, 9, 1.1, '#bde', '#2b7fae'),
    parallel: s('M1 10l7-8M4 11l7-8', '#222', 1.3),
    nearest: s('M1 11l7-9M7 5l4 5', '#333') + c(6, 5, 1.5, '#bde', '#2b7fae'),
    none: s('M2 11q-1-8 7-9M3 3l7 7', '#a55540', 1.5) + c(5, 6, 2, '#d9b795', '#865'),
    magnet: s('M2 10V5q0-3 3-3t3 3v5', '#c32a35', 2) + f('M10 9h2v2h-2z', '#357'),
    mirror: s('M6 0v12', '#777') + s('M5 3v7H1zM7 3v7h4z', '#31566d'),
    offset: s('M1 10h10M2 8q0-6 4-6t4 6zM4 8q0-3 2-3t2 3', '#31566d'),
    array: s('M1.5 1.5h3.5v3.5H1.5zM7 1.5h3.5v3.5H7zM1.5 7h3.5v3.5H1.5zM7 7h3.5v3.5H7z', '#31566d', 1.2),
    rotate: s('M8 2q4 3 1 7-4 3-7-1-1-4 3-6', '#2b6c99', 1.4) + f('M3 0l4 2-3 3z', '#2b6c99'),
    scale: s('M1 1h10v10H1z', '#8fa9b7') + s('M1 5h6v6H1z', '#31566d', 1.2),
    stretch: s('M1 1h4v10H1zM5 1l5 10H5', '#31566d', 1.2),
    breakRect: s('M4 2H1v8h10V2H8', '#31566d', 1.2) + s('M4 1v2M8 1v2', '#2b7fae', 1.5),
    chamfer: s('M1 11V6l5-4h5', '#3a7597', 1.3),
    fillet: s('M1 11Q1 2 11 2', '#27404f', 1.4),
    explode: f('M1 7l4-4 4 3-3 5z', '#df9340') + s('M6 5l5-4M8 6h4M4 11l5-3', '#833e28', 1.4),
    stack: f('M1 2h9v3H1z', '#74a9ad') + f('M2 6h9v3H2z', '#a7ccd4') + s('M1 2h9v8H1z', '#73868f'),
    zoomGrey: lens('#b7b5ba', '#f6f6f6'),
    pageGrey: s('M2 1h8v5H2zM4 6l5 5M2 10l3-4', '#b7b5ba'),
    undoGrey: s('M2 2v4h4M2 6q4-5 8 1v4', '#aaa', 1.3),
    pencil: f('M1 1h10v10H1z', '#d5dce0') + s('M10 2L4 9', '#9a7f25', 2.2) + s('M1 4h5M1 10h10', '#367'),
    windows: f('M1 1h6v5H1z', '#5582a9') + f('M4 5h7v6H4z', '#9fb9cd') + s('M4 5h7v6H4z', '#456'),
    leaf: f('M1 2q8-1 9 8-8 0-9-8z', '#83a780') + s('M1 1l10 10M2 8l7-4', '#35665d'),
    sheet: f('M1 1h10v10H1z', '#7fa3c2') + f('M5 5h6v5H5z', '#e2edf4') + s('M1 3h10M5 5v6', '#2b4c74'),
    info: c(6, 6, 5, '#1b64b4', '#124c8d') + f('M5 5h2v4.5H5zM5 2.5h2V4H5z', '#fff'),
    redX: f('M0 0h12v12H0z', '#ddd') + s('M2 2l8 8M10 2l-8 8', '#b3121b', 2.6)
};

// Fill every toolbar from its list of icon names
document.querySelectorAll('[data-icons]').forEach(function (bar) {
    bar.innerHTML = bar.dataset.icons.split(' ').map(function (name) {
        if (name === '|') {
            return '<span class="sep"></span>';
        }
        if (name.startsWith('t:')) {
            const label = name.slice(2);
            return `<button class="tool text ${label === 'A' ? '' : 'red'}">${label}</button>`;
        }
        return `<button class="tool ${name}" aria-label="${name}"><svg viewBox="0 0 12 12">${icons[name]}</svg></button>`;
    }).join('');
});
```
